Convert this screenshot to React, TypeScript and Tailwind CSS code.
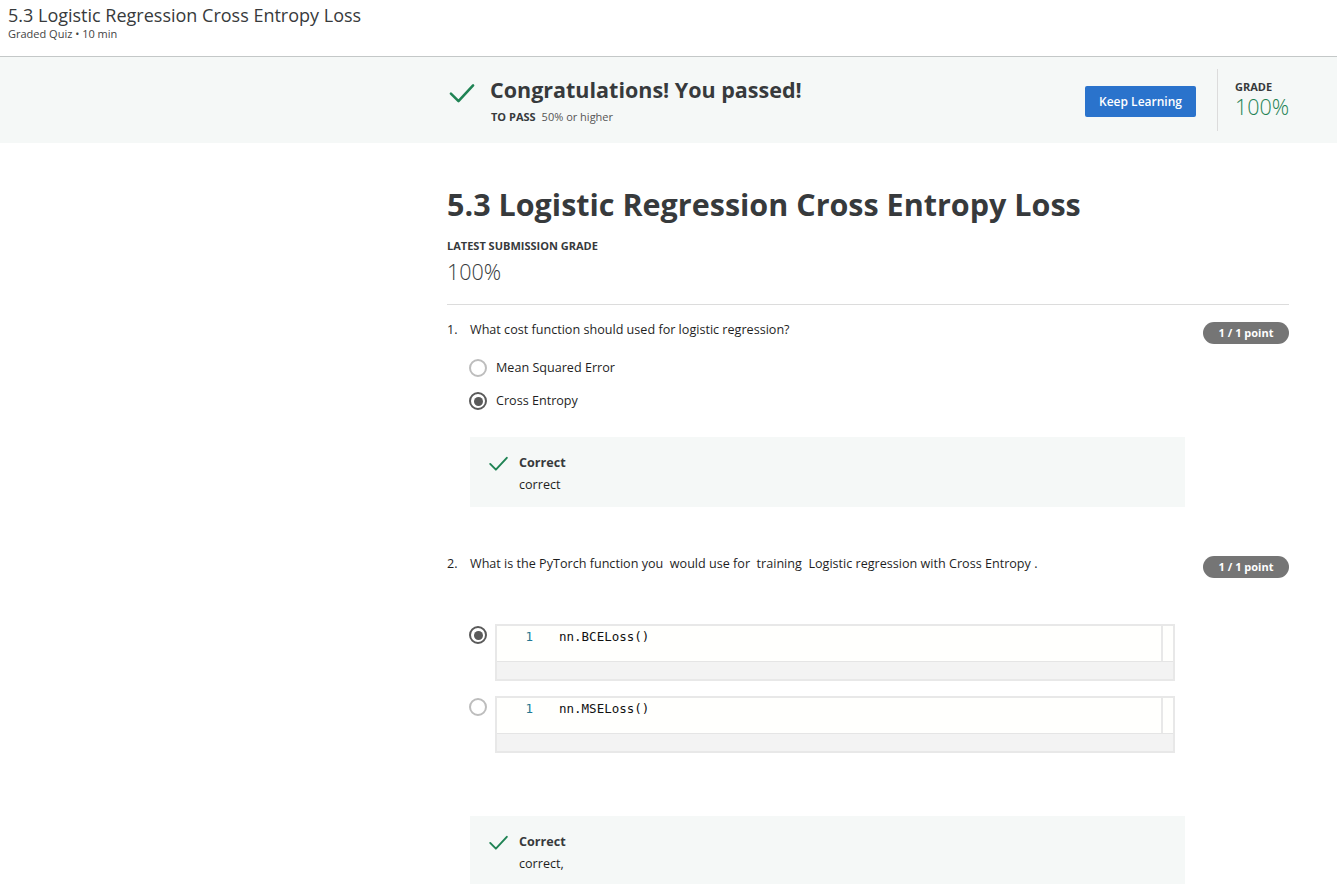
import React from 'react'

const sans = { fontFamily: '"Open Sans", "Noto Sans", sans-serif' }

function Check({ size = 26 }: { size?: number }) {
  return (
    <svg width={size} height={size} viewBox="0 0 24 24" fill="none">
      <path d="M2.5 12.5 L9 19 L21.5 5.5" stroke="#1f8354" strokeWidth="2.2" strokeLinecap="round" strokeLinejoin="round" />
    </svg>
  )
}

function Radio({ checked }: { checked?: boolean }) {
  return (
    <span className="flex h-[18px] w-[18px] shrink-0 items-center justify-center rounded-full border-2 border-[#bdbdbd] bg-white" style={checked ? { borderColor: '#5a5a5a' } : undefined}>
      {checked && <span className="h-[9px] w-[9px] rounded-full bg-[#5a5a5a]" />}
    </span>
  )
}

function Badge() {
  return (
    <span className="mt-[2px] flex h-[22px] w-[86px] items-center justify-center rounded-full bg-[#757575] text-[11px] font-bold text-white">
      1 / 1 point
    </span>
  )
}

function Feedback({ text }: { text: string }) {
  return (
    <div className="ml-[23px] w-[715px] bg-[#f5f8f7] px-[18px] pt-[15px] pb-[11px]">
      <div className="flex gap-[10px]">
        <div className="pt-[1px]"><Check size={21} /></div>
        <div>
          <div className="text-[12.6px] font-bold leading-[22px] text-[#373a3c]">Correct</div>
          <div className="text-[12.6px] leading-[22px] text-[#1f1f1f]">{text}</div>
        </div>
      </div>
    </div>
  )
}

function CodeOption({ checked, code }: { checked?: boolean; code: string }) {
  return (
    <div className="flex items-start gap-[8px] pl-[22px]">
      <div className="pt-[2px]"><Radio checked={checked} /></div>
      <div className="w-[680px] border-2 border-[#e8e8e8]">
        <div className="flex h-[35px] bg-[#fffffd]">
          <div className="flex flex-1 items-start pt-[2px] text-[12.5px] leading-[17px]" style={{ fontFamily: '"DejaVu Sans Mono", monospace' }}>
            <span className="w-[36px] text-right text-[#237893]">1</span>
            <span className="ml-[26px] text-[#111]">{code}</span>
          </div>
          <div className="w-[12px] border-l-2 border-[#e8e8e8]" />
        </div>
        <div className="h-[18px] border-t border-[#e5e5e5] bg-[#f3f3f3]" />
      </div>
    </div>
  )
}

export default function App() {
  return (
    <div className="min-h-screen bg-white text-[#373a3c]" style={sans}>
      <header className="h-[57px] border-b border-[#c4c8c8] px-[8px] pt-[3px]">
        <h1 className="text-[18px] leading-[24px] text-[#373a3c]">5.3 Logistic Regression Cross Entropy Loss</h1>
        <div className="text-[11px] leading-[14px] text-[#444]">Graded Quiz • 10 min</div>
      </header>

      <section className="h-[86px] bg-[#f5f8f7]">
        <div className="ml-[447px] flex w-[842px] items-start">
          <div className="mt-[22px] ml-[1px]"><Check size={28} /></div>
          <div className="ml-[14px] mt-[19px]">
            <div className="text-[21.5px] font-bold leading-[28px] text-[#373a3c]">Congratulations! You passed!</div>
            <div className="mt-[5px] flex items-center gap-[6px] pl-[1px] text-[11px]">
              <span className="font-bold">TO PASS</span>
              <span className="text-[#555]">50% or higher</span>
            </div>
          </div>
          <div className="flex-1" />
          <button className="mt-[29px] h-[31px] w-[111px] rounded-[2px] bg-[#2a73cc] text-[12px] font-semibold text-white">Keep Learning</button>
          <div className="ml-[21px] mr-[17px] mt-[12px] h-[62px] w-px bg-[#dcdcdc]" />
          <div className="mt-[23px] w-[54px]">
            <div className="text-[11px] font-bold leading-[14px] text-[#373a3c]">GRADE</div>
            <div className="text-[21.5px] font-light leading-[26px] text-[#1f8354]">100%</div>
          </div>
        </div>
      </section>

      <main className="ml-[447px] w-[842px] pt-[41px]">
        <h2 className="text-[30.5px] font-bold leading-[40px] text-[#373a3c]">5.3 Logistic Regression Cross Entropy Loss</h2>
        <div className="mt-[15px] text-[11px] font-bold leading-[14px]">LATEST SUBMISSION GRADE</div>
        <div className="mt-[5px] text-[21.5px] font-light leading-[28px]">100%</div>
        <div className="mt-[18px] h-px bg-[#dcdcdc]" />

        <div className="mt-[15px] flex items-start justify-between">
          <div className="flex text-[12.6px] leading-[20px] text-[#1f1f1f]">
            <span className="w-[23px]">1.</span>
            <span>What cost function should used for logistic regression?</span>
          </div>
          <Badge />
        </div>
        <div className="mt-[15px] flex flex-col gap-[15px] pl-[22px]">
          <label className="flex items-center gap-[9px] text-[12.6px] leading-[18px] text-[#1f1f1f]"><Radio /> Mean Squared Error</label>
          <label className="flex items-center gap-[9px] text-[12.6px] leading-[18px] text-[#1f1f1f]"><Radio checked /> Cross Entropy</label>
        </div>
        <div className="mt-[27px]"><Feedback text="correct" /></div>

        <div className="mt-[47px] flex items-start justify-between">
          <div className="flex text-[12.6px] leading-[20px] text-[#1f1f1f]">
            <span className="w-[23px]">2.</span>
            <span className="whitespace-pre">What is the PyTorch function you  would use for  training  Logistic regression with Cross Entropy .</span>
          </div>
          <Badge />
        </div>
        <div className="mt-[46px] flex flex-col gap-[15px]">
          <CodeOption checked code="nn.BCELoss()" />
          <CodeOption code="nn.MSELoss()" />
        </div>
        <div className="mt-[63px]"><Feedback text="correct," /></div>
      </main>
    </div>
  )
}
